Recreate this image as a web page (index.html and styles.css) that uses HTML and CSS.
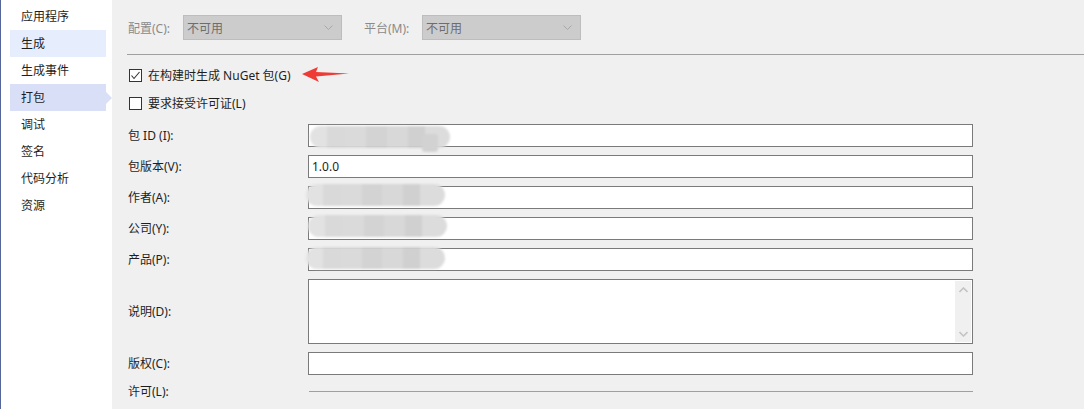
FILE: index.html
```html
<!DOCTYPE html>
<html lang="zh-CN">
<head>
<meta charset="utf-8">
<title>打包</title>
<link rel="stylesheet" href="styles.css">
</head>
<body>
<div class="app">
  <nav class="sidebar">
    <div class="nav-item">应用程序</div>
    <div class="nav-item hover">生成</div>
    <div class="nav-item">生成事件</div>
    <div class="nav-item active">打包</div>
    <div class="nav-item">调试</div>
    <div class="nav-item">签名</div>
    <div class="nav-item">代码分析</div>
    <div class="nav-item">资源</div>
  </nav>
  <main class="main">
    <div class="toolbar">
      <span class="tb-label cfg">配置(C):</span>
      <div class="combo"><span>不可用</span><svg class="chev" width="9" height="5" viewBox="0 0 9 5"><path d="M0.5 0.5 L4.5 4.5 L8.5 0.5" fill="none" stroke="#a8a8a8" stroke-width="1"/></svg></div>
      <span class="tb-label plat">平台(M):</span>
      <div class="combo"><span>不可用</span><svg class="chev" width="9" height="5" viewBox="0 0 9 5"><path d="M0.5 0.5 L4.5 4.5 L8.5 0.5" fill="none" stroke="#a8a8a8" stroke-width="1"/></svg></div>
    </div>
    <div class="sep"></div>
    <div class="checks">
      <div class="check-row">
        <span class="box"><svg width="11" height="11" viewBox="0 0 11 11"><path d="M1.5 5.5 L4 8.5 L9.5 2" fill="none" stroke="#333" stroke-width="1.1"/></svg></span>
        <span class="check-text">在构建时生成 NuGet 包(G)</span>
        <svg class="arrow" width="48" height="18" viewBox="0 0 48 18"><polygon points="0,8 16,1 14,6 47,7.5 14,10.5 17,16" fill="#ee3b36"/></svg>
      </div>
      <div class="check-row">
        <span class="box"></span>
        <span class="check-text">要求接受许可证(L)</span>
      </div>
    </div>
    <div class="form">
      <span class="f-label">包 ID (I):</span>
      <div class="field"><div class="blob b1"></div></div>
      <span class="f-label">包版本(V):</span>
      <div class="field"><span class="value">1.0.0</span></div>
      <span class="f-label">作者(A):</span>
      <div class="field"><div class="blob b3"></div></div>
      <span class="f-label">公司(Y):</span>
      <div class="field"><div class="blob b4"></div></div>
      <span class="f-label">产品(P):</span>
      <div class="field"><div class="blob b5"></div></div>
      <span class="f-label area-label">说明(D):</span>
      <div class="field area">
        <div class="scrollbar">
          <svg width="9" height="6" viewBox="0 0 9 6"><path d="M0.5 5 L4.5 1 L8.5 5" fill="none" stroke="#c4c4c4" stroke-width="1.6"/></svg>
          <svg width="9" height="6" viewBox="0 0 9 6"><path d="M0.5 1 L4.5 5 L8.5 1" fill="none" stroke="#c4c4c4" stroke-width="1.6"/></svg>
        </div>
      </div>
      <span class="f-label">版权(C):</span>
      <div class="field"></div>
      <span class="f-label">许可(L):</span>
      <div class="license-line"></div>
    </div>
  </main>
</div>
</body>
</html>
```
FILE: styles.css
```css
* { box-sizing: border-box; }
html, body { margin: 0; padding: 0; height: 100%; }
body {
  font-family: "Noto Sans", "Noto Sans CJK SC", sans-serif;
  font-size: 12px;
  color: #1e1e1e;
  background: #f0f0f0;
  overflow: hidden;
}
.app {
  display: flex;
  height: 409px;
}
.sidebar {
  width: 112px;
  flex: none;
  background: #ffffff;
  border-left: 1px solid #56669a;
  padding-top: 3px;
}
.nav-item {
  position: relative;
  height: 27px;
  line-height: 27px;
  margin-left: 9px;
  width: 96px;
  padding-left: 11px;
}
.nav-item.hover { background: #e6eefd; }
.nav-item.active { background: #d9dff6; }
.nav-item.active::after {
  content: "";
  position: absolute;
  right: -6px;
  top: 8px;
  border-top: 6px solid transparent;
  border-bottom: 6px solid transparent;
  border-left: 6px solid #d9dff6;
}
.main {
  flex: 1;
  padding-top: 15px;
}
.toolbar {
  display: flex;
  align-items: center;
  height: 25px;
  padding-left: 16px;
}
.tb-label { color: #8a8a8a; }
.tb-label.cfg { width: 55px; }
.tb-label.plat { width: 58px; margin-left: 22px; }
.combo {
  width: 159px;
  height: 25px;
  background: #cccccc;
  border: 1px solid #bdbdbd;
  display: flex;
  align-items: center;
  justify-content: space-between;
  padding: 0 8px 0 3px;
  color: #6d6d6d;
}
.sep {
  height: 1px;
  background: #a0a0a0;
  margin: 14px 0 0 15px;
}
.checks {
  margin-top: 10px;
  padding-left: 17px;
  display: flex;
  flex-direction: column;
  gap: 8px;
}
.check-row {
  display: flex;
  align-items: center;
  height: 20px;
  position: relative;
}
.box {
  width: 13px;
  height: 13px;
  border: 1px solid #333333;
  background: #ffffff;
  margin-right: 6px;
  display: flex;
  align-items: center;
  justify-content: center;
}
.arrow {
  position: absolute;
  left: 173px;
  top: 1px;
}
.form {
  margin-top: 11px;
  padding-left: 16px;
  display: grid;
  grid-template-columns: 180px 665px;
  grid-template-rows: 23px 23px 23px 23px 23px 65px 23px 17px;
  row-gap: 8px;
  align-items: center;
}
.f-label { line-height: 23px; }
.f-label.area-label { line-height: 65px; }
.field {
  position: relative;
  height: 23px;
  background: #ffffff;
  border: 1px solid #7a7a7a;
  display: flex;
  align-items: center;
  padding-left: 3px;
}
.field.area {
  height: 65px;
  align-items: stretch;
  justify-content: flex-end;
  padding: 1px;
}
.scrollbar {
  width: 16px;
  background: #f0f0f0;
  display: flex;
  flex-direction: column;
  align-items: center;
  justify-content: space-between;
  padding: 6px 0 5px;
}
.license-line {
  height: 1px;
  background: #a0a0a0;
  margin-left: 1px;
}
.blob {
  position: absolute;
  height: 22px;
  border-radius: 11px;
  filter: blur(1px);
  background: linear-gradient(90deg, #e2e2e2 0 12%, #d9d9d9 12% 25%, #dadada 25% 40%, #d3d3d3 40% 55%, #d8d8d8 55% 70%, #d0d0d0 70% 82%, #dcdcdc 82% 100%);
}
.b1 { left: 1px; top: 1px; width: 140px; }
.b1::after {
  content: "";
  position: absolute;
  left: 112px;
  top: 8px;
  width: 16px;
  height: 18px;
  background: #d2d2d2;
  border-radius: 3px;
}
.b3 { left: -3px; top: -3px; width: 139px; }
.b4 { left: -1px; top: -3px; width: 139px; }
.b5 { left: -3px; top: -2px; width: 139px; }
```
